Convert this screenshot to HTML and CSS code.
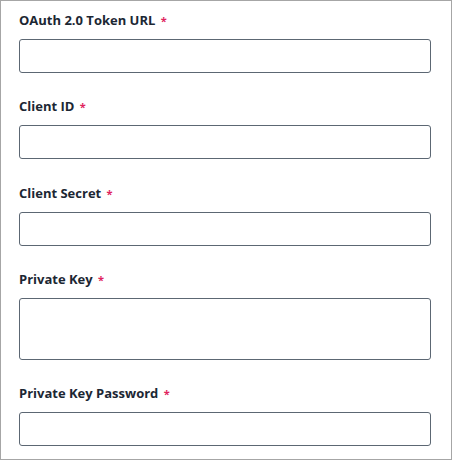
FILE: index.html
```html
<!DOCTYPE html>
<html>
<head>
<meta charset="utf-8">
<link rel="stylesheet" href="styles.css">
</head>
<body>
<div class="panel">
  <div class="field">
    <label class="label">OAuth 2.0 Token URL <span class="req">*</span></label>
    <input class="input" type="text">
  </div>
  <div class="field">
    <label class="label">Client ID <span class="req">*</span></label>
    <input class="input" type="text">
  </div>
  <div class="field">
    <label class="label">Client Secret <span class="req">*</span></label>
    <input class="input" type="text">
  </div>
  <div class="field">
    <label class="label">Private Key <span class="req">*</span></label>
    <textarea class="input area"></textarea>
  </div>
  <div class="field">
    <label class="label">Private Key Password <span class="req">*</span></label>
    <input class="input" type="text">
  </div>
</div>
</body>
</html>
```
FILE: styles.css
```css
html, body {
  margin: 0;
  padding: 0;
  background: #ffffff;
}
.panel {
  box-sizing: border-box;
  width: 452px;
  height: 460px;
  border: 1px solid #a6a6a6;
  padding: 10px 20px 0 18px;
  overflow: hidden;
  font-family: "Open Sans", "Liberation Sans", sans-serif;
}
.field {
  display: flex;
  flex-direction: column;
  margin-bottom: 24.25px;
}
.label {
  display: block;
  height: 18px;
  line-height: 18px;
  font-size: 13px;
  font-weight: 700;
  color: #1c2733;
  margin-bottom: 10px;
}
.req {
  color: #e0245e;
  font-size: 11px;
  margin-left: 2px;
}
.input {
  box-sizing: border-box;
  width: 412px;
  height: 34px;
  margin: 0;
  border: 1px solid #5c6773;
  border-radius: 3px;
  background: #fff;
  padding: 4px 8px;
  font-family: inherit;
  font-size: 13px;
  outline: none;
}
.area {
  height: 62px;
  resize: none;
  display: block;
}
```
